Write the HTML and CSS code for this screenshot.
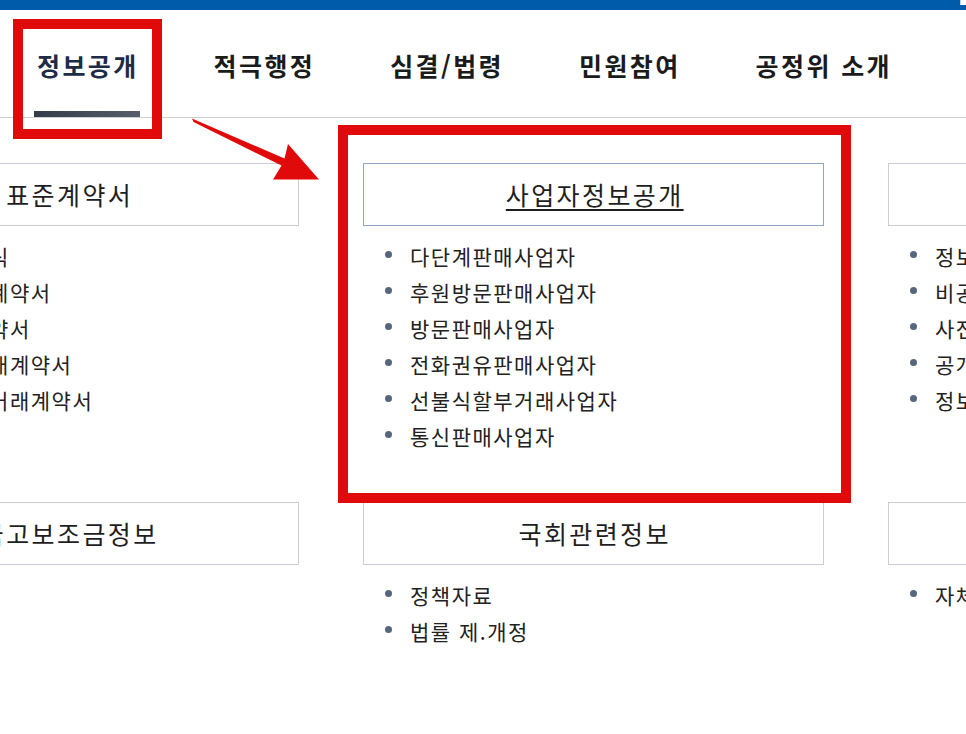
FILE: index.html
```html
<!DOCTYPE html>
<html lang="ko">
<head>
<meta charset="utf-8">
<title>정보공개</title>
<link rel="stylesheet" href="styles.css">
</head>
<body>
<div class="page">
  <div class="topbar"><span class="topbar-edge"></span></div>
  <nav class="gnb">
    <ul class="gnb-list">
      <li class="gnb-item is-active"><a href="#">정보공개</a></li>
      <li class="gnb-item"><a href="#">적극행정</a></li>
      <li class="gnb-item"><a href="#">심결/법령</a></li>
      <li class="gnb-item"><a href="#">민원참여</a></li>
      <li class="gnb-item"><a href="#">공정위 소개</a></li>
    </ul>
  </nav>

  <div class="content">
    <div class="menu-grid">
      <section class="menu-col">
        <h3 class="menu-head">표준계약서</h3>
        <ul class="menu-list">
          <li>표준계약양식</li>
          <li>하도급표준계약서</li>
          <li>가맹표준계약서</li>
          <li>유통표준거래계약서</li>
          <li>대규모유통거래계약서</li>
        </ul>
      </section>
      <section class="menu-col">
        <h3 class="menu-head is-active"><a href="#">사업자정보공개</a></h3>
        <ul class="menu-list">
          <li>다단계판매사업자</li>
          <li>후원방문판매사업자</li>
          <li>방문판매사업자</li>
          <li>전화권유판매사업자</li>
          <li>선불식할부거래사업자</li>
          <li>통신판매사업자</li>
        </ul>
      </section>
      <section class="menu-col">
        <h3 class="menu-head">정보공개제도</h3>
        <ul class="menu-list">
          <li>정보공개제도 안내</li>
          <li>비공개 대상정보</li>
          <li>사전정보공표</li>
          <li>공개청구</li>
          <li>정보목록</li>
        </ul>
      </section>

      <section class="menu-col">
        <h3 class="menu-head">국고보조금정보</h3>
      </section>
      <section class="menu-col">
        <h3 class="menu-head">국회관련정보</h3>
        <ul class="menu-list">
          <li>정책자료</li>
          <li>법률 제.개정</li>
        </ul>
      </section>
      <section class="menu-col">
        <h3 class="menu-head">자체감사</h3>
        <ul class="menu-list">
          <li>자체감사결과</li>
        </ul>
      </section>
    </div>
  </div>

  <div class="mark mark-nav"></div>
  <div class="mark mark-panel"></div>
  <svg class="mark-arrow" width="966" height="734" viewBox="0 0 966 734" aria-hidden="true">
    <polygon points="192,118.5 284.5,158.5 288,144 319,179.5 273,179.5 281.5,165.5 193.5,122" fill="#e10a0a"/>
  </svg>
</div>
</body>
</html>
```

FILE: styles.css
```css
html, body {
  margin: 0;
  padding: 0;
  overflow: hidden;
  background: #fff;
}

body {
  width: 966px;
  height: 734px;
  font-family: "Noto Sans CJK KR", "Noto Sans", sans-serif;
  color: #222;
}

.page {
  position: relative;
  width: 966px;
  height: 734px;
  overflow: hidden;
}

.topbar {
  height: 10px;
  background: #005bab;
  display: flex;
  justify-content: flex-end;
}

.topbar-edge {
  width: 5px;
  height: 5px;
  background: #fff;
  border-left: 1px solid #b9d3ee;
}

.gnb {
  height: 107px;
  border-bottom: 1px solid #cfcfcf;
}

.gnb-list {
  list-style: none;
  margin: 0;
  padding: 0 0 0 34px;
  display: flex;
  gap: 71px;
}

.gnb-item a {
  display: block;
  box-sizing: border-box;
  height: 107px;
  padding: 30px 1px 0 3px;
  font-size: 25px;
  line-height: 50px;
  font-weight: 700;
  letter-spacing: 2.4px;
  color: #1b1b1b;
  text-decoration: none;
  white-space: nowrap;
}

.gnb-item.is-active a {
  color: #1d2b46;
  border-bottom: 6px solid transparent;
  border-image: linear-gradient(90deg, #333a48, #575e6c) 1;
}

.content {
  padding-top: 45px;
}

.menu-grid {
  margin-left: -162px;
  display: grid;
  grid-template-columns: repeat(3, 461px);
  column-gap: 64px;
  row-gap: 48px;
}

.menu-head {
  margin: 0;
  box-sizing: border-box;
  height: 63px;
  border: 1px solid #c9ced6;
  text-align: center;
  font-size: 25px;
  font-weight: 400;
  line-height: 61px;
  letter-spacing: 2.4px;
  text-indent: 2.4px;
  color: #1e1e1e;
  white-space: nowrap;
  overflow: hidden;
}

.menu-head.is-active {
  border-color: #8fa5c2;
}

.menu-head a {
  color: #1e1e1e;
  text-decoration: underline;
  text-underline-offset: 4px;
  text-decoration-thickness: 2px;
}

.menu-list {
  list-style: none;
  margin: 12px 0 0;
  padding: 0;
}

.menu-list li {
  display: flex;
  align-items: center;
  height: 36px;
  font-size: 21px;
  line-height: 36px;
  letter-spacing: 1.5px;
  color: #222;
  white-space: nowrap;
}

.menu-list li::before {
  content: "";
  flex: none;
  width: 7px;
  height: 7px;
  border-radius: 50%;
  background: #56667c;
  margin: 0 18px 4px 22px;
}

.mark {
  position: absolute;
  box-sizing: border-box;
  border: 10px solid #e10a0a;
  pointer-events: none;
}

.mark-nav {
  left: 13px;
  top: 19px;
  width: 149px;
  height: 120px;
}

.mark-panel {
  left: 338px;
  top: 125px;
  width: 513px;
  height: 378px;
}

.mark-arrow {
  position: absolute;
  left: 0;
  top: 0;
  pointer-events: none;
}
```
